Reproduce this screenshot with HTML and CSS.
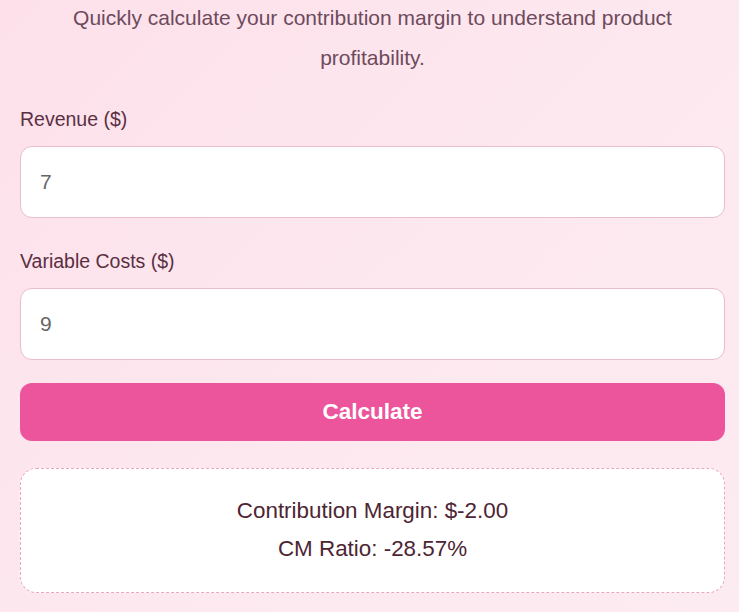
FILE: index.html
```html
<!DOCTYPE html>
<html lang="en">
<head>
    <meta charset="UTF-8">
    <title>Contribution Margin Calculator</title>
    <link rel="stylesheet" href="styles.css">
</head>
<body>
<div class="page">
    <p class="intro">Quickly calculate your contribution margin to understand product profitability.</p>
    <div class="field">
        <label for="revenue">Revenue ($)</label>
        <input type="number" id="revenue" value="7">
    </div>
    <div class="field">
        <label for="costs">Variable Costs ($)</label>
        <input type="number" id="costs" value="9">
    </div>
    <button class="calc" id="calc">Calculate</button>
    <div class="result" id="result">
        <p>Contribution Margin: $-2.00</p>
        <p>CM Ratio: -28.57%</p>
    </div>
</div>
<script>
    document.getElementById("calc").onclick = function () {
        var revenue = parseFloat(document.getElementById("revenue").value) || 0;
        var costs = parseFloat(document.getElementById("costs").value) || 0;
        var margin = revenue - costs;
        var ratio = revenue ? margin / revenue * 100 : 0;
        document.getElementById("result").innerHTML = "<p>Contribution Margin: $" + margin.toFixed(2) + "</p>"
                + "<p>CM Ratio: " + ratio.toFixed(2) + "%</p>";
    }
</script>
</body>
</html>
```

FILE: styles.css
```css
* {
    margin: 0;
    padding: 0;
    box-sizing: border-box;
}

html, body {
    height: 100%;
}

body {
    background: linear-gradient(135deg, #fde0ea 0%, #fde8ef 50%, #fdebf2 100%);
    font-family: "Liberation Sans", Arial, sans-serif;
    color: #5b2f42;
}

.page {
    padding: 0 14px 0 20px;
}

.intro {
    font-size: 21px;
    line-height: 40px;
    text-align: center;
    color: #6d4a5c;
    margin-top: -2px;
    margin-bottom: 30px;
}

.field {
    margin-bottom: 32px;
}

.field label {
    display: block;
    font-size: 19.5px;
    line-height: 22px;
    margin-bottom: 16px;
}

.field input {
    display: block;
    width: 100%;
    height: 72px;
    padding: 0 19px;
    border: 1px solid #e9bccf;
    border-radius: 12px;
    background: #fff;
    font-family: inherit;
    font-size: 21px;
    color: #666;
    outline: none;
}

.field:nth-child(3) {
    margin-bottom: 23px;
}

.calc {
    display: block;
    width: 100%;
    height: 58px;
    border: none;
    border-radius: 12px;
    background: #ec559c;
    color: #fff;
    font-family: inherit;
    font-size: 22.5px;
    font-weight: bold;
    cursor: pointer;
}

.result {
    margin-top: 27px;
    padding: 23px 20px 24px;
    border: 1px dashed #eaa5c2;
    border-radius: 16px;
    background: #fff;
    text-align: center;
    color: #4d2533;
    font-size: 22.4px;
    line-height: 38px;
}
```
